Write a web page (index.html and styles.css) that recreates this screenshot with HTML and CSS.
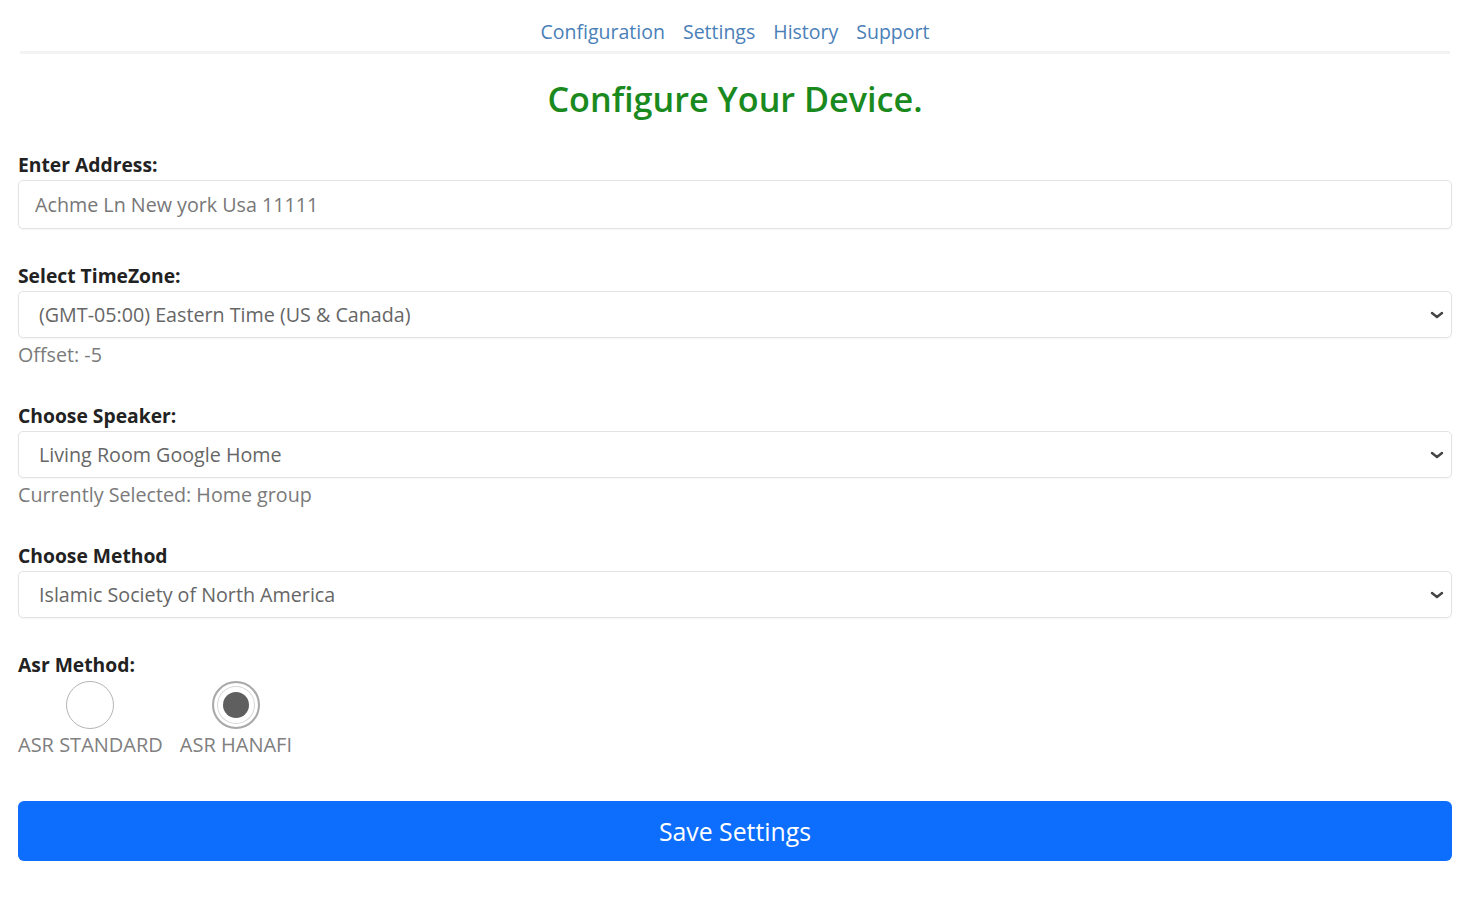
FILE: index.html
```html
<!DOCTYPE html>
<html lang="en">
<head>
<meta charset="utf-8">
<title>Configure Your Device</title>
<link rel="stylesheet" href="styles.css">
</head>
<body>
<div class="page">
  <nav class="topnav">
    <a href="#" class="navlink">Configuration</a>
    <a href="#" class="navlink">Settings</a>
    <a href="#" class="navlink">History</a>
    <a href="#" class="navlink">Support</a>
  </nav>
  <h1 class="title">Configure Your Device.</h1>
  <form class="form">
    <div class="group">
      <label class="label" for="addr">Enter Address:</label>
      <input class="field" id="addr" type="text" placeholder="Achme Ln New york Usa 11111">
    </div>
    <div class="group with-hint">
      <label class="label" for="tz">Select TimeZone:</label>
      <select class="field select" id="tz"><option>(GMT-05:00) Eastern Time (US &amp; Canada)</option></select>
      <div class="hint">Offset: -5</div>
    </div>
    <div class="group with-hint">
      <label class="label" for="spk">Choose Speaker:</label>
      <select class="field select" id="spk"><option>Living Room Google Home</option></select>
      <div class="hint">Currently Selected: Home group</div>
    </div>
    <div class="group">
      <label class="label" for="mth">Choose Method</label>
      <select class="field select" id="mth"><option>Islamic Society of North America</option></select>
    </div>
    <div class="group">
      <span class="label">Asr Method:</span>
      <div class="radios">
        <label class="radio-item">
          <input type="radio" name="asr" class="radio">
          <span class="radio-text">ASR STANDARD</span>
        </label>
        <label class="radio-item">
          <input type="radio" name="asr" class="radio" checked>
          <span class="radio-text">ASR HANAFI</span>
        </label>
      </div>
    </div>
    <button type="button" class="save">Save Settings</button>
  </form>
</div>
</body>
</html>
```

FILE: styles.css
```css
* { box-sizing: border-box; }
html, body { margin: 0; padding: 0; background: #fff; }
body {
  font-family: "Open Sans", "Noto Sans", "Liberation Sans", sans-serif;
  color: #222;
}
.page {
  margin: 0 30px 0 18px;
  display: flex;
  flex-direction: column;
}
.topnav {
  display: flex;
  justify-content: center;
  gap: 18px;
  height: 54px;
  padding-top: 19px;
  border-bottom: 3px solid #f3f3f3;
  margin: 0 2px;
}
.navlink {
  color: #4a80b8;
  text-decoration: none;
  font-size: 19.5px;
  line-height: 26px;
}
.title {
  margin: 21px 0 0;
  text-align: center;
  color: #1a8a1e;
  font-size: 34.2px;
  line-height: 48px;
  font-weight: 600;
}
.form {
  display: flex;
  flex-direction: column;
  margin-top: 29px;
}
.group {
  display: flex;
  flex-direction: column;
  margin-bottom: 34px;
}
.group.with-hint { margin-bottom: 31px; }
.label {
  font-weight: 700;
  font-size: 19.3px;
  line-height: 26px;
  color: #222;
  margin-bottom: 2px;
}
.field {
  width: 100%;
  height: 49px;
  border: 1.5px solid #e3e3e3;
  border-radius: 5px;
  background: #fff;
  font-family: inherit;
  font-size: 19.7px;
  color: #666;
  padding: 0 16px;
  box-shadow: 0 1px 2px rgba(0,0,0,0.04);
}
.field::placeholder { color: #777; }
.select {
  -webkit-appearance: none;
  appearance: none;
  height: 47px;
  padding: 0 40px 0 20px;
  background-image: url("data:image/svg+xml,%3Csvg xmlns='http://www.w3.org/2000/svg' width='14' height='10' viewBox='0 0 14 10'%3E%3Cpath d='M2 3l5 4 5-4' fill='none' stroke='%23444' stroke-width='2.4' stroke-linecap='round' stroke-linejoin='round'/%3E%3C/svg%3E");
  background-repeat: no-repeat;
  background-position: right 7px center;
  background-size: 14px 10px;
}
.hint {
  font-size: 19.7px;
  line-height: 34px;
  color: #7a7a7a;
}
.radios {
  display: flex;
  gap: 17px;
  margin-top: 1px;
}
.radio-item {
  display: flex;
  flex-direction: column;
  align-items: center;
  gap: 2px;
}
.radio {
  -webkit-appearance: none;
  appearance: none;
  width: 48px;
  height: 48px;
  margin: 0;
  border: 1.5px solid #b5b5b5;
  border-radius: 50%;
  background: #fff;
  display: grid;
  place-content: center;
}
.radio:checked {
  border: 2px solid #a8a8a8;
  box-shadow: inset 0 0 0 3px #fff, inset 0 0 0 4px #d8d8d8;
}
.radio:checked::before {
  content: "";
  width: 26px;
  height: 26px;
  border-radius: 50%;
  background: #5f5f5f;
}
.radio-text {
  font-size: 20px;
  line-height: 28px;
  color: #808080;
}
.save {
  margin-top: 8px;
  height: 60px;
  width: 100%;
  border: none;
  border-radius: 6px;
  background: #0d6efd;
  color: #fff;
  font-family: inherit;
  font-size: 24.8px;
}
```
